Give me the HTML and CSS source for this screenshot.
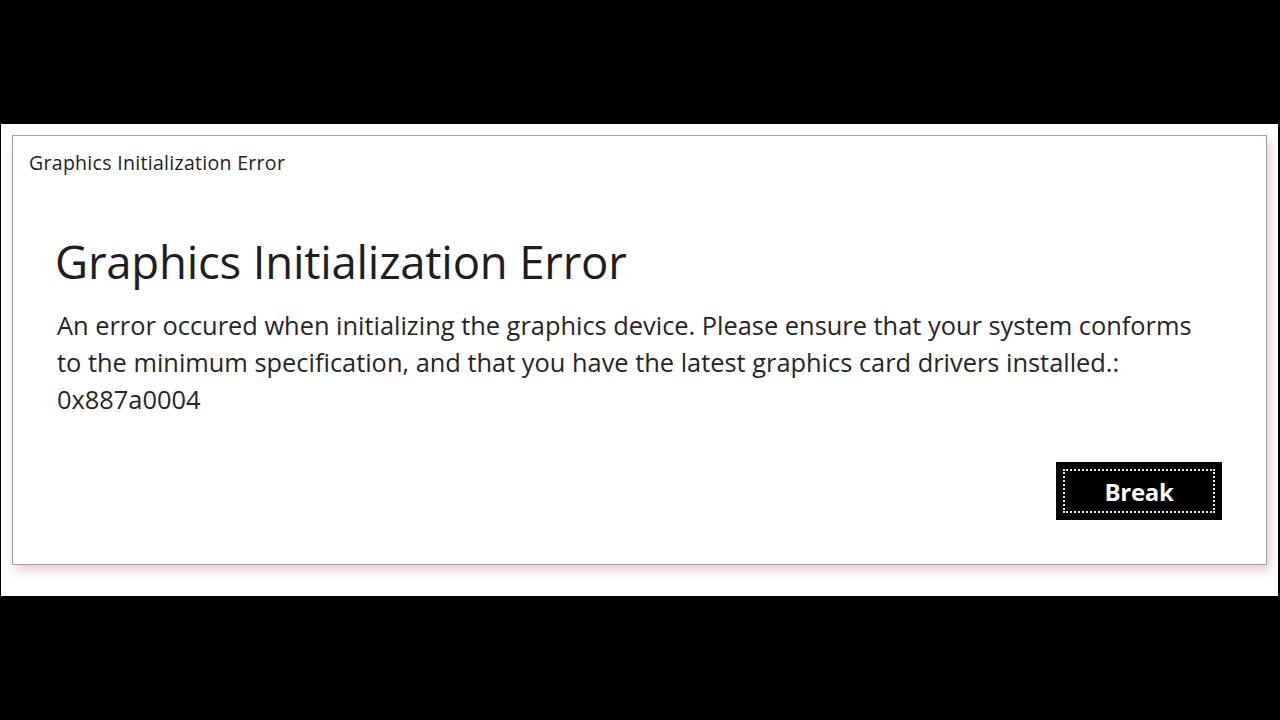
FILE: index.html
```html
<!DOCTYPE html>
<html lang="en">
<head>
    <meta charset="UTF-8">
    <meta name="viewport" content="width=device-width, initial-scale=1.0">
    <title>Graphics Initialization Error</title>
    <link rel="stylesheet" href="styles.css">
</head>
<body>
    <!-- white strip -->
    <div class="screen">
        <!-- dialog -->
        <div class="dialog">
            <div class="caption">Graphics Initialization Error</div>
            <div class="content">
                <h1 class="heading">Graphics Initialization Error</h1>
                <p class="message">An error occured when initializing the graphics device. Please ensure that your system conforms to the minimum specification, and that you have the latest graphics card drivers installed.: 0x887a0004</p>
            </div>
            <div class="actions">
                <button class="break-btn"><span class="focus">Break</span></button>
            </div>
        </div>
    </div>
</body>
</html>
```

FILE: styles.css
```css
/* page */
body {
    margin: 0;
    padding: 0;
    background: #000;
    font-family: "Open Sans", "Noto Sans", sans-serif;
    height: 720px;
    overflow: hidden;
}

/* white strip across the middle */
.screen {
    margin: 124px 2px 0 1px;
    height: 472px;
    background: #fff;
    padding: 11px 11px 0 11px;
    box-sizing: border-box;
}

/* dialog box */
.dialog {
    height: 430px;
    border: 1px solid #ad9aa2;
    box-shadow: 3px 5px 10px rgba(180, 120, 145, 0.4);
    box-sizing: border-box;
    display: flex;
    flex-direction: column;
    color: #1e1e1e;
}

.caption {
    font-size: 19.5px;
    line-height: 24px;
    padding: 15px 0 0 16px;
    color: #222;
    letter-spacing: 0.3px;
}

.content {
    padding: 0 58px 0 44px;
    flex: 1;
}

.heading {
    margin: 56px 0 0 -2px;
    font-size: 45.5px;
    font-weight: 400;
    line-height: 60px;
    letter-spacing: -0.2px;
}

.message {
    margin: 16px 0 0 0;
    font-size: 25.4px;
    line-height: 37px;
    color: #262626;
}

.actions {
    display: flex;
    justify-content: flex-end;
    padding: 0 44px 44px 0;
}

/* black button with dotted focus box */
.break-btn {
    width: 166px;
    height: 58px;
    background: #000;
    border: none;
    padding: 7px;
    margin: 0;
    cursor: pointer;
    display: flex;
}

.focus {
    flex: 1;
    border: 2px dotted #e8e8e8;
    color: #fff;
    font-family: "Open Sans", "Noto Sans", sans-serif;
    font-weight: 700;
    font-size: 24px;
    display: flex;
    justify-content: center;
    align-items: center;
    letter-spacing: -0.3px;
}
```
